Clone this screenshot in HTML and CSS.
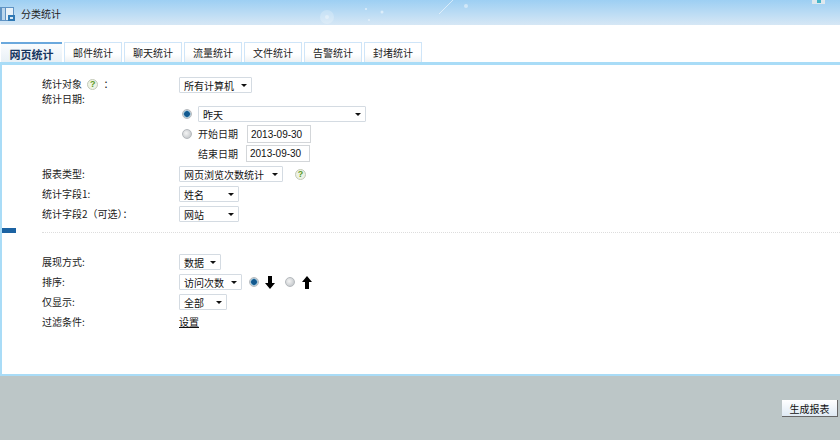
FILE: index.html
```html
<!DOCTYPE html>
<html lang="zh">
<head>
<meta charset="utf-8">
<title>分类统计</title>
<link rel="stylesheet" href="styles.css">
</head>
<body>
<div class="page">
  <header class="head">
    <svg class="head-icon" width="16" height="17" viewBox="0 0 16 17">
      <rect x="0" y="2" width="14" height="14" fill="#5f93c4"/>
      <rect x="2" y="3" width="3" height="12" fill="#bcd6ec"/>
      <rect x="6" y="3" width="7" height="12" fill="#e8f1f8"/>
      <rect x="8" y="10" width="7" height="6" fill="#2f78b4"/>
      <rect x="10" y="12" width="3" height="2" fill="#d7e8f5"/>
    </svg>
    <span class="head-title">分类统计</span>
    <svg class="head-decor" width="290" height="25" viewBox="0 0 290 25">
      <circle cx="47" cy="17" r="7" fill="#fff" opacity=".22"/>
      <circle cx="47" cy="17" r="2" fill="#fff" opacity=".35"/>
      <circle cx="102" cy="12" r="1.5" fill="#fff" opacity=".5"/>
      <circle cx="86" cy="9" r="1" fill="#fff" opacity=".6"/>
      <circle cx="89" cy="20" r="1" fill="#fff" opacity=".5"/>
      <circle cx="186" cy="6" r="2" fill="#fff" opacity=".45"/>
      <line x1="159" y1="14" x2="173" y2="0" stroke="#fff" stroke-opacity=".55"/>
    </svg>
    <svg class="head-tool" width="14" height="4" viewBox="0 0 14 4">
      <rect width="13" height="4" fill="#dfe8ee"/>
      <rect x="5" width="4" height="3" fill="#45b4c8"/>
    </svg>
  </header>
  <nav class="tabs">
    <a class="tab tab-on">网页统计</a>
    <a class="tab">邮件统计</a>
    <a class="tab">聊天统计</a>
    <a class="tab">流量统计</a>
    <a class="tab">文件统计</a>
    <a class="tab">告警统计</a>
    <a class="tab">封堵统计</a>
  </nav>
  <main class="panel">
    <span class="marker"></span>
    <div class="form">
      <div class="row row-first">
        <span class="label label-first">统计对象 <i class="help">?</i> ：</span>
        <span class="sel w73">所有计算机<b class="caret"></b></span>
      </div>
      <div class="row row-text"><span class="label">统计日期:</span></div>
      <div class="date-block">
        <div class="date-row date-top">
          <i class="radio radio-on"></i>
          <span class="sel w168">昨天<b class="caret"></b></span>
        </div>
        <div class="date-row date-start">
          <i class="radio"></i>
          <span class="date-label">开始日期</span>
          <span class="input">2013-09-30</span>
        </div>
        <div class="date-row date-end">
          <span class="date-label">结束日期</span>
          <span class="input">2013-09-30</span>
        </div>
      </div>
      <div class="row">
        <span class="label">报表类型:</span>
        <span class="sel w104">网页浏览次数统计<b class="caret"></b></span>
        <i class="help help-after">?</i>
      </div>
      <div class="row">
        <span class="label">统计字段1:</span>
        <span class="sel w60">姓名<b class="caret"></b></span>
      </div>
      <div class="row row-last">
        <span class="label">统计字段2（可选）：</span>
        <span class="sel w60">网站<b class="caret"></b></span>
      </div>
      <div class="rule"></div>
      <div class="row">
        <span class="label">展现方式:</span>
        <span class="sel w42">数据<b class="caret"></b></span>
      </div>
      <div class="row">
        <span class="label">排序:</span>
        <span class="sel w63">访问次数<b class="caret"></b></span>
        <i class="radio radio-on radio-sort"></i>
        <svg class="arrow" width="10" height="13" viewBox="0 0 10 13"><path d="M3 0h4v7h3l-5 6-5-6h3z"/></svg>
        <i class="radio radio-sort radio-gap"></i>
        <svg class="arrow" width="10" height="13" viewBox="0 0 10 13"><path d="M5 0l5 6H7v7H3V6H0z"/></svg>
      </div>
      <div class="row">
        <span class="label">仅显示:</span>
        <span class="sel w48">全部<b class="caret"></b></span>
      </div>
      <div class="row">
        <span class="label">过滤条件:</span>
        <a class="link">设置</a>
      </div>
    </div>
  </main>
  <footer class="foot">
    <button class="gen">生成报表</button>
  </footer>
</div>
</body>
</html>
```
FILE: styles.css
```css
* { box-sizing: border-box; }
html, body { margin: 0; padding: 0; background: #fff; }
body {
  width: 840px;
  height: 447px;
  overflow: hidden;
  font: 10px/14px "Noto Sans CJK SC", "Liberation Sans", sans-serif;
  color: #222;
}
.page { display: flex; flex-direction: column; height: 440px; }

.head {
  position: relative;
  flex: none;
  height: 25px;
  display: flex;
  align-items: center;
  background: linear-gradient(#9dcff3, #d6e7f5);
}
.head-icon { flex: none; margin-top: 1px; }
.head-title { margin-left: 5px; margin-top: 2px; }
.head-decor { position: absolute; left: 280px; top: 0; }
.head-tool { position: absolute; left: 812px; top: 0; }

.tabs {
  flex: none;
  display: flex;
  gap: 2px;
  height: 37px;
  padding: 17px 0 0 1px;
}
.tab {
  width: 58px;
  height: 20px;
  text-align: center;
  line-height: 20px;
  border: 1px solid #cfe5f8;
  border-bottom: 0;
  background: linear-gradient(#fff 60%, #eef1f3);
  color: #222;
}
.tab-on {
  width: 61px;
  font-size: 11px;
  font-weight: 700;
  color: #16355f;
  border: 0;
  border-top: 2px solid #6aa8dd;
  background: linear-gradient(#fafcfe, #e8f0f6);
}

.panel {
  position: relative;
  flex: none;
  height: 314px;
  border-top: 3px solid #a9dcf7;
  border-left: 2px solid #a9dcf7;
  border-bottom: 2px solid #a9dcf7;
}
.marker {
  position: absolute;
  left: 0;
  top: 163px;
  width: 14px;
  height: 5px;
  background: #1c63a3;
}
.form { padding-left: 40px; }

.row {
  display: flex;
  align-items: center;
  height: 16px;
  margin-bottom: 4px;
}
.row-first { margin-top: 12px; margin-bottom: 0; }
.row-text { height: 10px; margin-bottom: 0; padding-top: 2px; line-height: 10px; }
.row-last { margin-bottom: 0; }
.label { flex: none; width: 137px; display: flex; align-items: center; white-space: pre; }
.label-first { align-self: flex-start; }

.sel {
  position: relative;
  flex: none;
  display: block;
  height: 16px;
  line-height: 15px;
  padding-left: 4px;
  background: #fff;
  border: 1px solid #d4dbe2;
  border-radius: 1px;
  color: #111;
  white-space: nowrap;
}
.caret {
  position: absolute;
  right: 4px;
  top: 6px;
  width: 0;
  height: 0;
  border: 3px solid transparent;
  border-top: 3px solid #111;
}
.w42 { width: 42px; }
.w48 { width: 48px; }
.w60 { width: 60px; }
.w63 { width: 63px; }
.w73 { width: 73px; }
.w104 { width: 104px; }
.w168 { width: 168px; }

.help {
  display: inline-block;
  width: 11px;
  height: 11px;
  margin: 0 3px;
  border: 1px solid #c3c9b8;
  border-radius: 50%;
  background: #eef3e4;
  color: #5d9b1f;
  font: 700 9px/9px "Liberation Sans", sans-serif;
  text-align: center;
}
.help-after { margin-left: 12px; }

.date-block { margin: 3px 0 4px 137px; }
.date-row { display: flex; align-items: center; }
.date-top { height: 16px; margin-bottom: 3px; }
.date-start { height: 18px; margin-bottom: 2px; }
.date-end { height: 17px; padding-left: 19px; }
.date-label { flex: none; width: 49px; white-space: nowrap; }
.date-end .date-label { width: 48px; }
.date-end .input { height: 17px; line-height: 16px; }

.radio {
  flex: none;
  display: block;
  width: 10px;
  height: 10px;
  margin: 0 6px 0 3px;
  border-radius: 50%;
  background: radial-gradient(circle at 40% 40%, #f4f4f4, #b9bec2);
  border: 1px solid #b5b9bd;
}
.radio-on {
  background: radial-gradient(circle, #13598f 0 2.5px, #6ba6c9 3px, #d9dde0 4px);
}
.input {
  display: block;
  flex: none;
  width: 64px;
  height: 18px;
  padding-left: 3px;
  border: 1px solid #d3d6d9;
  background: #fff;
  font: 10px/17px "Liberation Sans", sans-serif;
  color: #111;
}

.rule {
  height: 0;
  border-top: 1px dotted #dddddd;
  margin: 10px 0 21px;
}

.radio-sort { margin: 0 6px 0 7px; }
.radio-gap { margin-left: 10px; margin-right: 7px; }
.arrow { flex: none; fill: #000; }

.link { color: #111; text-decoration: underline; }

.foot {
  flex: 1;
  display: flex;
  justify-content: flex-end;
  align-items: flex-start;
  padding: 24px 2px 0 0;
  background: #bcc6c7;
}
.gen {
  width: 56px;
  height: 17px;
  padding: 0;
  font: 10px/15px "Noto Sans CJK SC", sans-serif;
  color: #111;
  background: linear-gradient(#fff, #dfeaf4);
  border: 0;
  border-right: 1px solid #666;
  border-bottom: 1px solid #666;
}
```
